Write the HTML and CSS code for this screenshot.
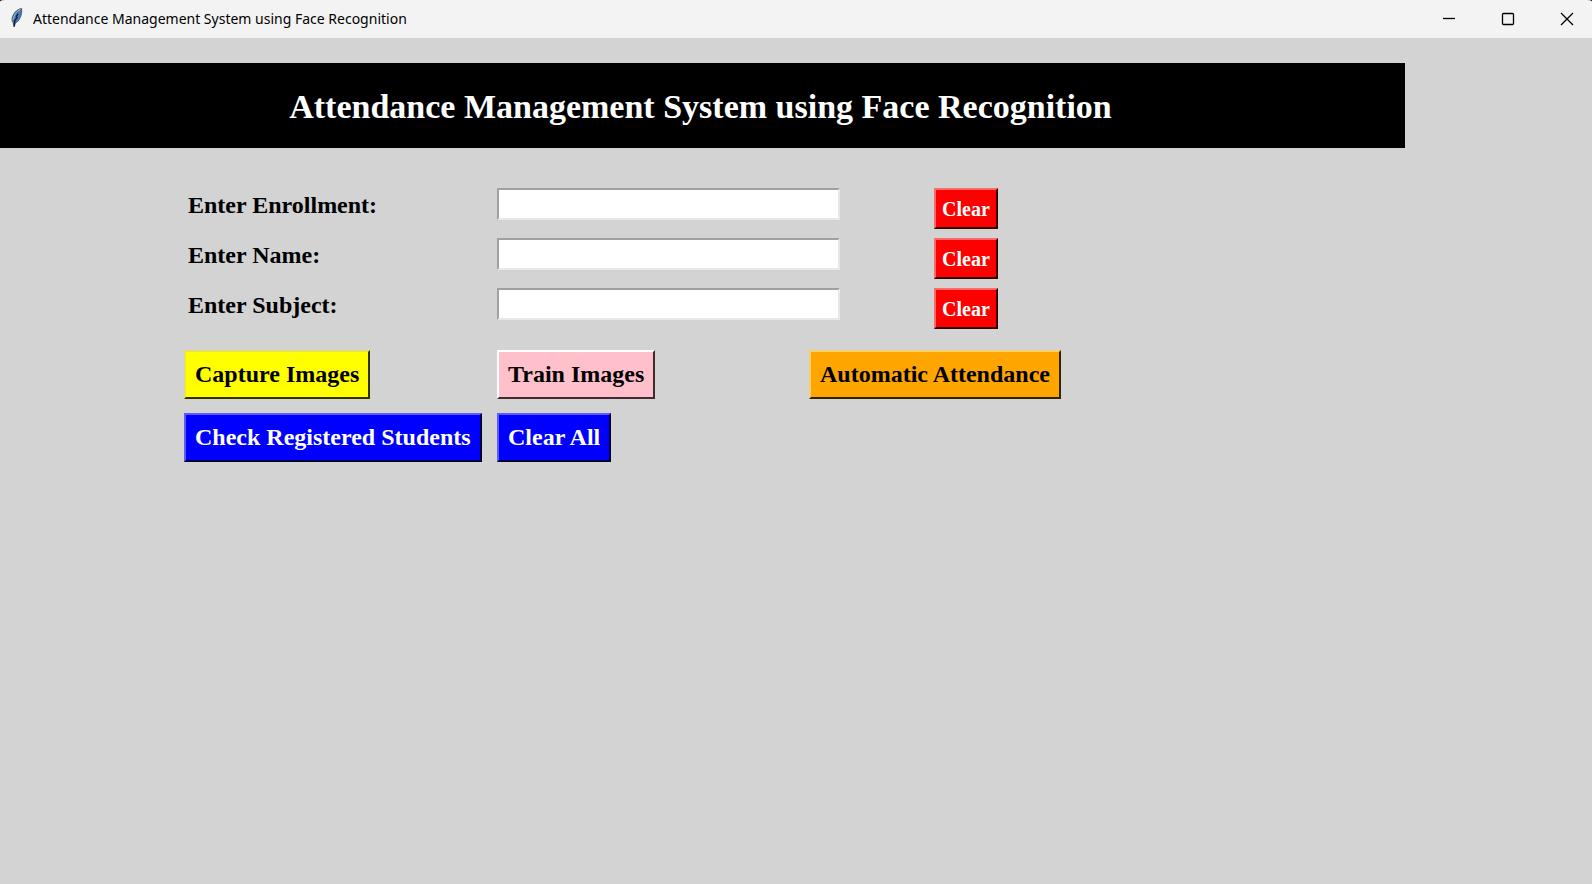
FILE: index.html
```html
<!DOCTYPE html>
<html lang="en">
<head>
<meta charset="utf-8">
<title>Attendance Management System using Face Recognition</title>
<link rel="stylesheet" href="styles.css">
</head>
<body>
<div class="window">
  <div class="titlebar">
    <svg class="app-icon" width="12" height="20" viewBox="0 0 12 20" aria-hidden="true">
      <path d="M10.600 .6C7 .8 3.500 4 1.600 8.500C.6 11 1 13.500 2.200 14.800L3.200 18.800L4.200 15.200C8 13.500 11.500 7 10.600 .6Z" fill="#3f7cc4" stroke="#555" stroke-width="1"/>
      <path d="M9.500 1.500C5.500 3 3 7 2 12" fill="none" stroke="#a9b4bf" stroke-width="1"/>
      <path d="M7 5.500L5.400 8.500L6 9.500L3.800 12.500L3.200 18.500" fill="none" stroke="#111c2c" stroke-width="1.300"/>
    </svg>
    <span class="titlebar-text">Attendance Management System using Face Recognition</span>
    <div class="controls">
      <button class="control" type="button" aria-label="Minimize"><svg width="14" height="14" viewBox="0 0 14 14"><path d="M1 6.500H13"/></svg></button>
      <button class="control" type="button" aria-label="Maximize"><svg width="14" height="14" viewBox="0 0 14 14"><rect x="1.500" y="1.500" width="11" height="11" rx="1"/></svg></button>
      <button class="control" type="button" aria-label="Close"><svg width="14" height="14" viewBox="0 0 14 14"><path d="M1 1L13 13M13 1L1 13"/></svg></button>
    </div>
  </div>
  <h1 class="banner">Attendance Management System using Face Recognition</h1>
  <form class="form">
    <label class="label" for="enrollment">Enter Enrollment:</label>
    <input class="field" id="enrollment" type="text">
    <button class="button clear" type="button">Clear</button>
    <label class="label" for="name">Enter Name:</label>
    <input class="field" id="name" type="text">
    <button class="button clear" type="button">Clear</button>
    <label class="label" for="subject">Enter Subject:</label>
    <input class="field" id="subject" type="text">
    <button class="button clear" type="button">Clear</button>
  </form>
  <div class="actions">
    <button class="button yellow" type="button">Capture Images</button>
    <button class="button pink" type="button">Train Images</button>
    <button class="button orange" type="button">Automatic Attendance</button>
    <button class="button blue" type="button">Check Registered Students</button>
    <button class="button blue" type="button">Clear All</button>
  </div>
</div>
</body>
</html>
```
FILE: styles.css
```css
* { box-sizing: border-box; }

body {
  margin: 0;
  background: #222;
  font-family: "Liberation Serif", serif;
  font-weight: bold;
  color: #000;
}

.window {
  min-height: 100vh;
  background: #d3d3d3;
  border-radius: 6px 6px 0 0 / 2px 2px 0 0;
  overflow: hidden;
}

.titlebar {
  display: flex;
  align-items: center;
  height: 38px;
  padding-left: 11px;
  background: #f3f3f3;
}

.app-icon { margin-bottom: 2px; }

.titlebar-text {
  margin-left: 10px;
  font: 14px/36px "Noto Sans", sans-serif;
}

.controls {
  display: flex;
  align-self: stretch;
  margin-left: auto;
  margin-right: -4px;
}

.control {
  display: flex;
  align-items: center;
  justify-content: center;
  width: 59px;
  padding: 0;
  border: 0;
  background: none;
}

.control svg {
  fill: none;
  stroke: #000;
  stroke-width: 1.3;
}

.banner {
  margin: 25px 187px 0 0;
  padding: 24px 4px 21px 0;
  background: #000;
  color: #fff;
  font-size: 34px;
  line-height: 40px;
  text-align: center;
}

.form {
  display: grid;
  grid-template-columns: 313px 343px auto;
  grid-auto-rows: 41px;
  row-gap: 9px;
  justify-content: start;
  align-items: start;
  margin: 40px 0 0 184px;
}

.label {
  padding-left: 4px;
  font-size: 24px;
  line-height: 35px;
}

.field {
  height: 32px;
  padding: 2px 4px;
  border: 2px solid;
  border-color: #a0a0a0 #e8e8e8 #e8e8e8 #a0a0a0;
  background: #fff;
  font: inherit;
  font-size: 20px;
}

.button {
  height: 49px;
  padding: 0 9px;
  border: 2px solid;
  font: inherit;
  font-size: 24px;
  line-height: 27px;
  white-space: nowrap;
}

.clear {
  height: 41px;
  margin-left: 94px;
  padding: 2px 6px 0;
  border-color: #ff6b6b #300 #300 #ff6b6b;
  background: #f00;
  color: #fff;
  font-size: 20px;
}

.actions {
  display: grid;
  grid-template-columns: 313px 312px auto;
  row-gap: 14px;
  justify-content: start;
  justify-items: start;
  margin: 21px 0 0 184px;
}

.yellow {
  border-color: #e4e45c #333300 #333300 #e4e45c;
  background: #ff0;
}

.pink {
  border-color: #fff #402b2f #402b2f #fff;
  background: #ffc0cb;
}

.orange {
  border-color: #f5d070 #332100 #332100 #f5d070;
  background: #ffa500;
}

.blue {
  border-color: #5c5cf5 #000033 #000033 #5c5cf5;
  background: #00f;
  color: #fff;
}
```
